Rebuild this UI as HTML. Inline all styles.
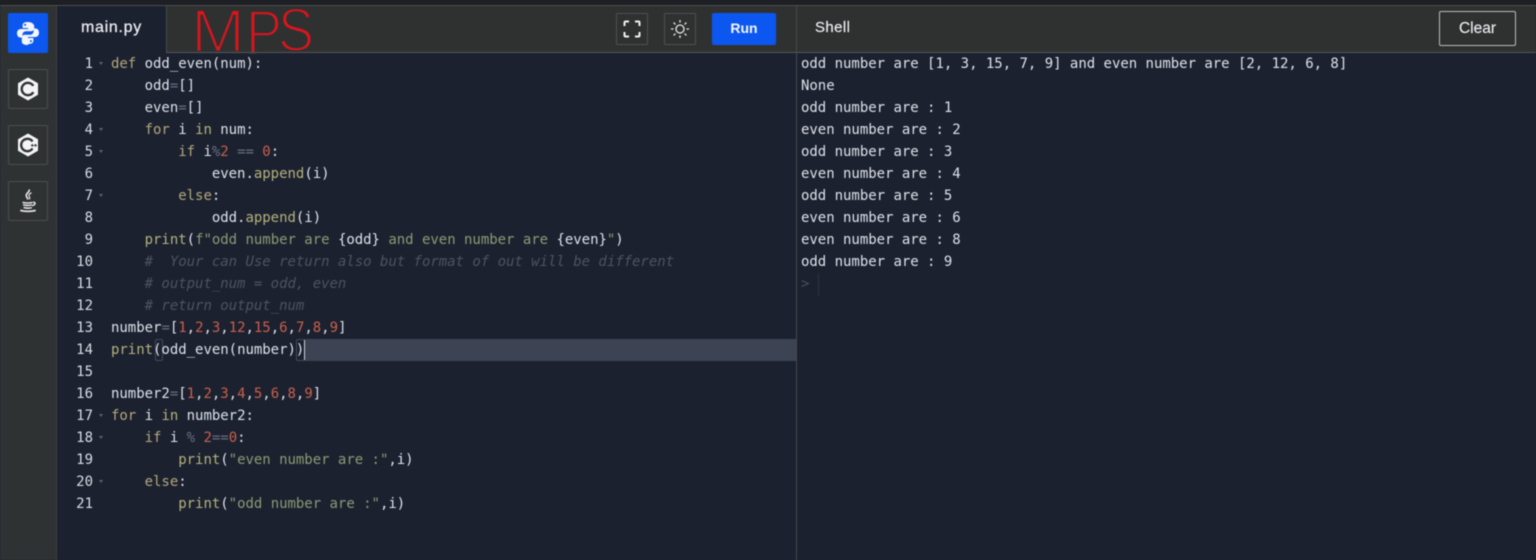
<!DOCTYPE html>
<html lang="en"><head><meta charset="utf-8"><title>main.py</title>
<style>
html,body{margin:0;padding:0;width:1536px;height:560px;overflow:hidden;background:#1c2130}
*{box-sizing:border-box}
.a{position:absolute}
#root{position:relative;width:1536px;height:560px;overflow:hidden;background:#1c2130;filter:blur(.45px)}
.code{position:absolute;font:14px/22px "DejaVu Sans Mono",monospace;letter-spacing:-.025px;white-space:pre;color:#dde1e8;height:22px}
.n{position:absolute;left:60px;width:33px;text-align:right;font:14px/22px "DejaVu Sans Mono",monospace;color:#d8dce2;height:22px}
.f{position:absolute;left:99px;width:0;height:0;border-left:2.5px solid transparent;border-right:2.5px solid transparent;border-top:3px solid #5d626b}
.k{color:#b3a77c}.b{color:#b4b27c}.s{color:#8d9a73}.d{color:#c9604b}.o{color:#667080}.c{color:#4d5360;font-style:italic}.i{color:#cfd6df}
.side{position:absolute;left:8px;width:40px;height:40px;border:1px solid #4a4d4e;border-radius:2px;display:flex;align-items:center;justify-content:center}
.sq{position:absolute;top:13px;width:32px;height:32px;border:1px solid #4c4e50;border-radius:1px;display:flex;align-items:center;justify-content:center}
</style></head><body>
<div id="root">
<div class="a" style="left:0;top:0;width:1536px;height:5px;background:#1d1f22"></div>
<div class="a" style="left:0;top:5px;width:1536px;height:1px;background:#4b4d4f"></div>
<div class="a" style="left:0;top:6px;width:57px;height:554px;background:#2f3233"></div>
<div class="a" style="left:56px;top:6px;width:1px;height:554px;background:#3d4043"></div>
<div class="a" style="left:166px;top:6px;width:1370px;height:46px;background:#2f3131"></div>
<div class="a" style="left:166px;top:6px;width:1px;height:46px;background:#46484a"></div>

<svg class="a" style="left:166px;top:0" width="170" height="60" viewBox="166 0 170 60">
<g font-family="'Liberation Sans',sans-serif" font-size="61" fill="#dc141c" stroke="#2f3131" stroke-width="2.4" paint-order="fill stroke">
<text x="191" y="52" textLength="54" lengthAdjust="spacingAndGlyphs">M</text>
<text x="246" y="53" textLength="36" lengthAdjust="spacingAndGlyphs">P</text>
<text x="278" y="51" textLength="36" lengthAdjust="spacingAndGlyphs">S</text>
</g></svg>

<div class="a" style="left:166px;top:52px;width:1370px;height:1px;background:#54575a"></div>
<div class="a" style="left:796px;top:6px;width:1px;height:554px;background:#45484b"></div>

<div class="a" style="left:81px;top:18px;font:16px/20px 'Liberation Sans',sans-serif;color:#eceef0;letter-spacing:.7px;-webkit-text-stroke:.25px #eceef0">main.py</div>

<!-- sidebar -->
<div class="side" style="top:13px;background:#0b57f0;border-color:#0b57f0">
<svg width="24" height="24" viewBox="0 0 24 24" fill="#f2f5fb"><path d="M11.900 1C7.500 1 6.600 2.600 6.600 4.400V7h5.500v1H4.600C2.400 8 1 9.800 1 12.200c0 2.700 1.400 4.300 3.400 4.300h2v-2.700c0-2 1.700-3.600 3.700-3.600h5.300c1.500 0 2.800-1.300 2.800-2.900V4.400C17.200 2.500 15.500 1 11.900 1zM9.100 2.800a1 1 0 1 1 0 2.100 1 1 0 0 1 0-2.100z"/><path d="M12.100 23c4.400 0 5.300-1.600 5.300-3.400V17h-5.500v-1h7.500c2.200 0 3.600-1.800 3.600-4.200 0-2.700-1.400-4.300-3.400-4.300h-2v2.700c0 2-1.700 3.600-3.700 3.600H8.600c-1.500 0-2.800 1.300-2.800 2.900v3.900c0 1.900 1.700 3.400 6.300 3.400zm2.800-1.800a1 1 0 1 1 0-2.100 1 1 0 0 1 0 2.100z"/></svg></div>
<div class="side" style="top:69px">
<svg width="24" height="26" viewBox="0 0 24 26"><path fill="#f4f4f4" d="M12 1.500 22 7.200v11.600L12 24.500 2 18.800V7.200z"/><path fill="none" stroke="#2f3233" stroke-width="2.400" d="M17.300 9.900A6.200 6.200 0 1 0 17.300 16.100"/></svg></div>
<div class="side" style="top:125px">
<svg width="24" height="26" viewBox="0 0 24 26"><path fill="#f4f4f4" d="M12 1.500 22 7.200v11.600L12 24.500 2 18.800V7.200z"/><path fill="none" stroke="#2f3233" stroke-width="2.400" d="M16.500 9.500A6.200 6.200 0 1 0 16.500 16.500"/><path fill="#2f3233" d="M15.800 12h1v.9h.9v1h-.9v.9h-1v-.9h-.9v-1h.9zM19 12h1v.9h.9v1H20v.9h-1v-.9h-.9v-1h.9z"/></svg></div>
<div class="side" style="top:181px">
<svg width="22" height="27" viewBox="0 0 20 24" fill="none" stroke="#e4e4e4"><path d="M11 1c1 2.500-3.500 3.600-2.500 6.200.4 1.100 1.300 1.800 1.300 3" stroke-width="1.500"/><path d="M13.200 4c-2.400 1.300-2.800 2.300-2 3.700.5.900.5 1.500 0 2.300" stroke-width="1.100"/><path d="M5 12.800c3 .8 7 .8 9 0M5.500 15c2.600.7 5.800.7 8 0M14.500 12.800c2.500-.5 2.800 2-.8 2.900" stroke-width="1.400"/><path d="M6 17.500c2.600.7 5.500.7 7.500 0" stroke-width="1.400"/><path d="M3 20c3.600 1.200 10.500 1.200 14 0" stroke-width="1.500"/></svg></div>

<!-- toolbar -->
<div class="sq" style="left:616px">
<svg width="18" height="18" viewBox="0 0 18 18" fill="none" stroke="#f0f0f0" stroke-width="2"><path d="M1.500 6V2.500a1 1 0 0 1 1-1H6M12 1.500h3.500a1 1 0 0 1 1 1V6M16.500 12v3.500a1 1 0 0 1-1 1H12M6 16.500H2.500a1 1 0 0 1-1-1V12"/></svg></div>
<div class="sq" style="left:664px">
<svg width="20" height="20" viewBox="0 0 20 20" fill="none" stroke="#e8e8e8" stroke-width="1.300"><circle cx="10" cy="10" r="4"/><path d="M10 1v2.500M10 16.500V19M1 10h2.500M16.500 10H19M3.600 3.600l1.800 1.800M14.600 14.600l1.800 1.800M3.600 16.400l1.800-1.800M14.600 5.400l1.800-1.800"/></svg></div>
<div class="a" style="left:712px;top:13px;width:64px;height:32px;background:#0b57f0;border-radius:2px;color:#f4f7ff;font:bold 14px/31px 'Liberation Sans',sans-serif;text-align:center">Run</div>
<div class="a" style="left:815px;top:18px;font:15px/20px 'Liberation Sans',sans-serif;color:#eceef0;letter-spacing:.4px;-webkit-text-stroke:.15px #eceef0">Shell</div>
<div class="a" style="left:1439px;top:11px;width:77px;height:35px;border:1px solid #b9bbbc;border-radius:2px;color:#e8eaec;font:15.5px/33px 'Liberation Sans',sans-serif;text-align:center;-webkit-text-stroke:.15px #e8eaec">Clear</div>

<!-- active line -->
<div class="a" style="left:305px;top:339px;width:491px;height:22px;background:#3c4453"></div>
<div class="a" style="left:155px;top:339px;width:8px;height:22px;border:1px solid #444b57;border-radius:2px"></div>
<div class="a" style="left:296px;top:339px;width:9px;height:22px;border:1px solid #444b57;border-radius:2px"></div>
<div class="a" style="left:304px;top:340px;width:1px;height:20px;background:#cfd3d9"></div>

<!-- line numbers -->
<div class="n" style="top:53px">1</div><div class="n" style="top:75px">2</div><div class="n" style="top:97px">3</div><div class="n" style="top:119px">4</div><div class="n" style="top:141px">5</div><div class="n" style="top:163px">6</div><div class="n" style="top:185px">7</div><div class="n" style="top:207px">8</div><div class="n" style="top:229px">9</div><div class="n" style="top:251px">10</div><div class="n" style="top:273px">11</div><div class="n" style="top:295px">12</div><div class="n" style="top:317px">13</div><div class="n" style="top:339px">14</div><div class="n" style="top:361px">15</div><div class="n" style="top:383px">16</div><div class="n" style="top:405px">17</div><div class="n" style="top:427px">18</div><div class="n" style="top:449px">19</div><div class="n" style="top:471px">20</div><div class="n" style="top:493px">21</div>
<div class="f" style="top:62px"></div><div class="f" style="top:128px"></div><div class="f" style="top:150px"></div><div class="f" style="top:194px"></div><div class="f" style="top:414px"></div><div class="f" style="top:436px"></div><div class="f" style="top:480px"></div>

<!-- code -->
<div class="code" style="left:111px;top:53px"><span class="k">def</span> odd_even(num):</div>
<div class="code" style="left:111px;top:75px">    odd<span class="o">=</span>[]</div>
<div class="code" style="left:111px;top:97px">    even<span class="o">=</span>[]</div>
<div class="code" style="left:111px;top:119px">    <span class="k">for</span> i <span class="b">in</span> num:</div>
<div class="code" style="left:111px;top:141px">        <span class="k">if</span> i<span class="o">%</span><span class="d">2</span> <span class="o">==</span> <span class="d">0</span>:</div>
<div class="code" style="left:111px;top:163px">            even.<span class="b">append</span>(i)</div>
<div class="code" style="left:111px;top:185px">        <span class="k">else</span>:</div>
<div class="code" style="left:111px;top:207px">            odd.<span class="b">append</span>(i)</div>
<div class="code" style="left:111px;top:229px">    <span class="b">print</span>(<span class="s">f"odd number are </span>{odd}<span class="s"> and even number are </span>{even}<span class="s">"</span>)</div>
<div class="code c" style="left:111px;top:251px">    #  Your can Use return also but format of out will be different</div>
<div class="code c" style="left:111px;top:273px">    # output_num = odd, even</div>
<div class="code c" style="left:111px;top:295px">    # return output_num</div>
<div class="code" style="left:111px;top:317px">number<span class="o">=</span>[<span class="d">1</span>,<span class="d">2</span>,<span class="d">3</span>,<span class="d">12</span>,<span class="d">15</span>,<span class="d">6</span>,<span class="d">7</span>,<span class="d">8</span>,<span class="d">9</span>]</div>
<div class="code" style="left:111px;top:339px"><span class="b">print</span>(odd_even(number))</div>
<div class="code" style="left:111px;top:383px">number2<span class="o">=</span>[<span class="d">1</span>,<span class="d">2</span>,<span class="d">3</span>,<span class="d">4</span>,<span class="d">5</span>,<span class="d">6</span>,<span class="d">8</span>,<span class="d">9</span>]</div>
<div class="code" style="left:111px;top:405px"><span class="k">for</span> i <span class="b">in</span> number2:</div>
<div class="code" style="left:111px;top:427px">    <span class="k">if</span> i <span class="o">%</span> <span class="d">2</span><span class="o">==</span><span class="d">0</span>:</div>
<div class="code" style="left:111px;top:449px">        <span class="b">print</span>(<span class="s">"even number are :"</span>,i)</div>
<div class="code" style="left:111px;top:471px">    <span class="k">else</span>:</div>
<div class="code" style="left:111px;top:493px">        <span class="b">print</span>(<span class="s">"odd number are :"</span>,i)</div>

<!-- shell -->
<div class="code" style="left:801px;top:53px">odd number are [1, 3, 15, 7, 9] and even number are [2, 12, 6, 8]</div>
<div class="code" style="left:801px;top:75px">None</div>
<div class="code" style="left:801px;top:97px">odd number are : 1</div>
<div class="code" style="left:801px;top:119px">even number are : 2</div>
<div class="code" style="left:801px;top:141px">odd number are : 3</div>
<div class="code" style="left:801px;top:163px">even number are : 4</div>
<div class="code" style="left:801px;top:185px">odd number are : 5</div>
<div class="code" style="left:801px;top:207px">even number are : 6</div>
<div class="code" style="left:801px;top:229px">even number are : 8</div>
<div class="code" style="left:801px;top:251px">odd number are : 9</div>
<div class="code" style="left:801px;top:273px;color:#4a4f5a">&gt;</div>
<div class="a" style="left:818px;top:273px;width:1px;height:23px;background:#2d3340"></div>
</div>
</body></html>
